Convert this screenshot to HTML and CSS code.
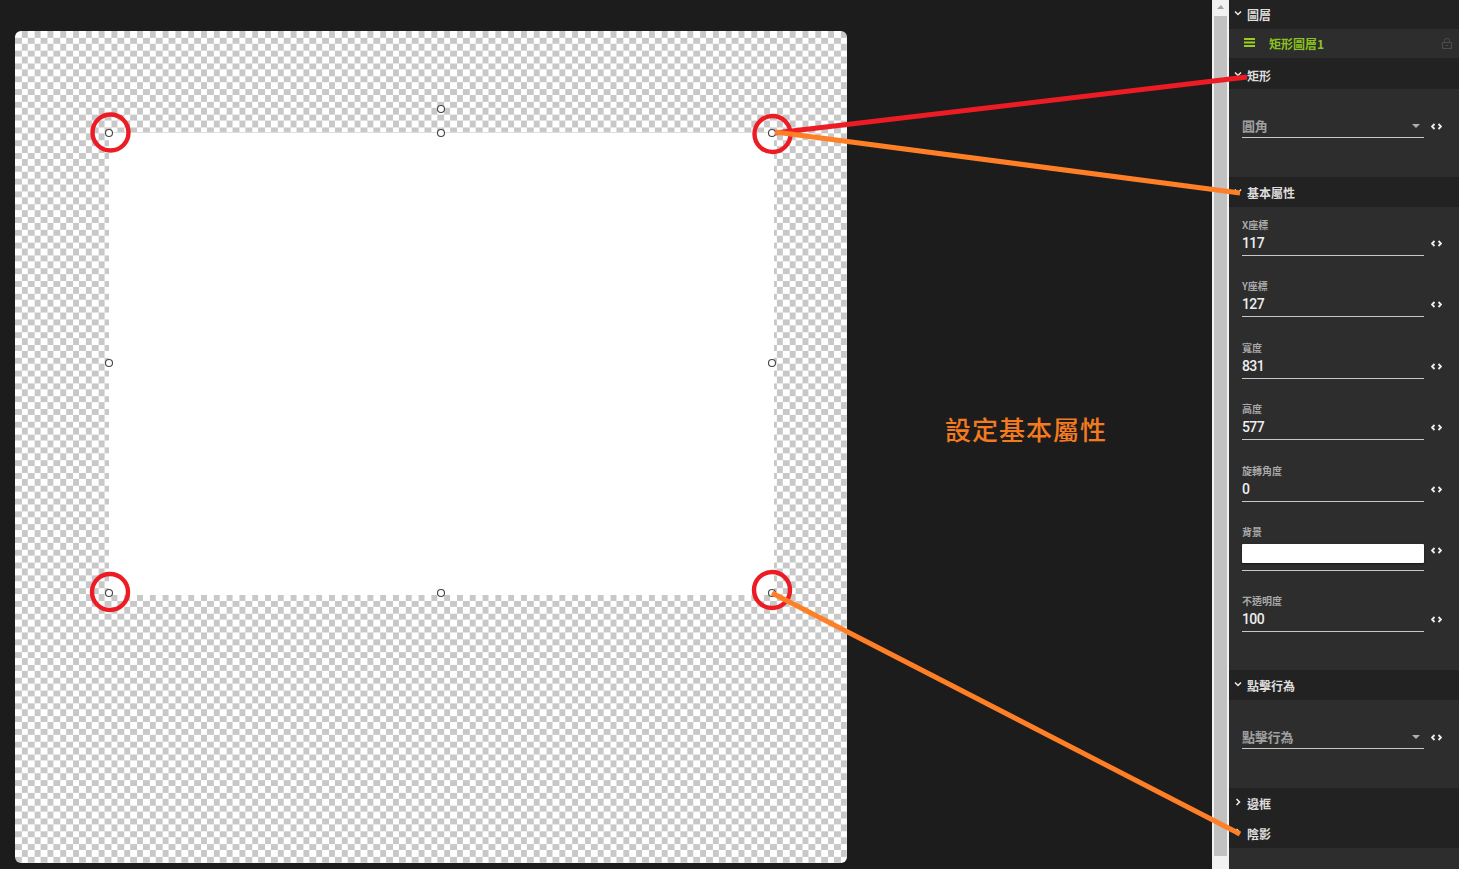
FILE: index.html
```html
<!DOCTYPE html>
<html lang="zh-Hant">
<head>
    <meta charset="UTF-8">
    <title>設定基本屬性</title>
    <link rel="stylesheet" href="styles.css">
</head>
<body>
    <div class="stage">
        <div class="canvas">
            <div class="shape"></div>
        </div>
    </div>

    <div class="scrollbar">
        <div class="scroll-up"></div>
        <div class="scroll-thumb"></div>
    </div>

    <div class="panel">
        <div class="head">
            <svg class="chev" viewBox="0 0 8 6"><path d="M1 1.5 4 4.5 7 1.5"/></svg>
            <span>圖層</span>
        </div>
        <div class="layer">
            <svg class="bars" viewBox="0 0 11 9"><path d="M0 1h11M0 4.5h11M0 8h11"/></svg>
            <span class="layer-name">矩形圖層1</span>
            <svg class="lock" viewBox="0 0 10 11"><path d="M.5 4.5h9v6h-9zM2.5 4.5V2.5a2.5 2 0 0 1 5 0v2M4 7.5h2"/></svg>
        </div>

        <div class="head head-tall">
            <svg class="chev" viewBox="0 0 8 6"><path d="M1 1.5 4 4.5 7 1.5"/></svg>
            <span>矩形</span>
        </div>
        <div class="section section-select">
            <div class="row">
                <div class="select">圓角<i class="caret"></i></div>
                <svg class="code" viewBox="0 0 11 7"><path d="M3.5 1 1 3.5 3.5 6M7.500 1 10 3.500 7.500 6"/></svg>
            </div>
        </div>

        <div class="head">
            <svg class="chev" viewBox="0 0 8 6"><path d="M1 1.5 4 4.5 7 1.5"/></svg>
            <span>基本屬性</span>
        </div>
        <div class="section section-props">
            <div class="field">
                <div class="label">X座標</div>
                <div class="row">
                    <div class="value">117</div>
                    <svg class="code" viewBox="0 0 11 7"><path d="M3.5 1 1 3.5 3.5 6M7.500 1 10 3.500 7.500 6"/></svg>
                </div>
            </div>
            <div class="field">
                <div class="label">Y座標</div>
                <div class="row">
                    <div class="value">127</div>
                    <svg class="code" viewBox="0 0 11 7"><path d="M3.5 1 1 3.5 3.5 6M7.500 1 10 3.500 7.500 6"/></svg>
                </div>
            </div>
            <div class="field">
                <div class="label">寬度</div>
                <div class="row">
                    <div class="value">831</div>
                    <svg class="code" viewBox="0 0 11 7"><path d="M3.5 1 1 3.5 3.5 6M7.500 1 10 3.500 7.500 6"/></svg>
                </div>
            </div>
            <div class="field">
                <div class="label">高度</div>
                <div class="row">
                    <div class="value">577</div>
                    <svg class="code" viewBox="0 0 11 7"><path d="M3.5 1 1 3.5 3.5 6M7.500 1 10 3.500 7.500 6"/></svg>
                </div>
            </div>
            <div class="field">
                <div class="label">旋轉角度</div>
                <div class="row">
                    <div class="value">0</div>
                    <svg class="code" viewBox="0 0 11 7"><path d="M3.5 1 1 3.5 3.5 6M7.500 1 10 3.500 7.500 6"/></svg>
                </div>
            </div>
            <div class="field field-color">
                <div class="label">背景</div>
                <div class="row">
                    <div class="value value-color"><div class="swatch"></div></div>
                    <svg class="code" viewBox="0 0 11 7"><path d="M3.5 1 1 3.5 3.5 6M7.500 1 10 3.500 7.500 6"/></svg>
                </div>
            </div>
            <div class="field">
                <div class="label">不透明度</div>
                <div class="row">
                    <div class="value">100</div>
                    <svg class="code" viewBox="0 0 11 7"><path d="M3.5 1 1 3.5 3.5 6M7.500 1 10 3.500 7.500 6"/></svg>
                </div>
            </div>
        </div>

        <div class="head head-low">
            <svg class="chev" viewBox="0 0 8 6"><path d="M1 1.5 4 4.5 7 1.5"/></svg>
            <span>點擊行為</span>
        </div>
        <div class="section section-select">
            <div class="row">
                <div class="select">點擊行為<i class="caret"></i></div>
                <svg class="code" viewBox="0 0 11 7"><path d="M3.5 1 1 3.5 3.5 6M7.500 1 10 3.500 7.500 6"/></svg>
            </div>
        </div>

        <div class="head">
            <svg class="chev chev-right" viewBox="0 0 8 6"><path d="M1 1.5 4 4.5 7 1.5"/></svg>
            <span>邊框</span>
        </div>
        <div class="head">
            <svg class="chev chev-right" viewBox="0 0 8 6"><path d="M1 1.5 4 4.5 7 1.5"/></svg>
            <span>陰影</span>
        </div>
    </div>

    <div class="note">設定基本屬性</div>

    <svg class="overlay" width="1459" height="869" viewBox="0 0 1459 869">
        <g class="handles">
            <circle cx="441" cy="109" r="3.500"/>
            <circle cx="109" cy="133" r="3.500"/>
            <circle cx="441" cy="133" r="3.500"/>
            <circle cx="772" cy="133" r="3.500"/>
            <circle cx="109" cy="363" r="3.500"/>
            <circle cx="772" cy="363" r="3.500"/>
            <circle cx="109" cy="593" r="3.500"/>
            <circle cx="441" cy="593" r="3.500"/>
            <circle cx="772" cy="593" r="3.500"/>
        </g>
        <g class="rings">
            <circle cx="110.500" cy="132.500" r="18"/>
            <circle cx="772.500" cy="134" r="18"/>
            <circle cx="110" cy="592" r="18"/>
            <circle cx="772" cy="590" r="18"/>
        </g>
        <path class="line-red" d="M775 133 1247 77"/>
        <path class="line-orange" d="M775 132 1240 193"/>
        <path class="line-orange" d="M772 593 1240 834"/>
    </svg>
</body>
</html>
```

FILE: styles.css
```css
body {
    margin: 0;
    width: 1459px;
    height: 869px;
    overflow: hidden;
    display: flex;
    position: relative;
    background: #1c1c1c;
    font-family: "Noto Sans CJK TC", "Roboto", sans-serif;
}

.stage {
    width: 1212px;
    padding: 31px 0 0 15px;
    box-sizing: border-box;
}
.canvas {
    width: 832px;
    height: 832px;
    position: relative;
    border-radius: 6px;
    background-color: #fff;
    background-image: conic-gradient(#c8c8c8 25%, #fff 0 50%, #c8c8c8 0 75%, #fff 0);
    background-size: 12.8px 12.8px;
}
.shape {
    position: absolute;
    left: 94px;
    top: 102px;
    width: 665px;
    height: 462px;
    background: #fff;
    box-shadow: 0 -1px 0 #ddd;
}

.note {
    position: absolute;
    left: 945px;
    top: 410px;
    font-size: 26px;
    font-weight: 500;
    line-height: 38px;
    letter-spacing: 1px;
    color: #f47a20;
    white-space: nowrap;
}

.overlay {
    position: absolute;
    left: 0;
    top: 0;
    pointer-events: none;
}
.handles circle {
    fill: #fff;
    stroke: #444;
    stroke-width: 1.100;
}
.rings circle {
    fill: none;
    stroke: #ed1c24;
    stroke-width: 4.400;
}
.line-red {
    fill: none;
    stroke: #ed1c24;
    stroke-width: 5;
}
.line-orange {
    fill: none;
    stroke: #ff7f27;
    stroke-width: 5;
}

.scrollbar {
    width: 17px;
    height: 869px;
    background: #f1f1f1;
    flex-shrink: 0;
    position: relative;
}
.scroll-up {
    width: 0;
    margin: 5px 0 0 5px;
    border-left: 4px solid transparent;
    border-right: 3px solid transparent;
    border-bottom: 4px solid #a3a3a3;
}
.scroll-thumb {
    width: 13px;
    height: 840px;
    margin: 7px 0 0 2px;
    background: #c1c1c1;
}

.panel {
    width: 230px;
    height: 869px;
    background: #2d2d2d;
    flex-shrink: 0;
}
.head {
    height: 30px;
    display: flex;
    align-items: center;
    padding-left: 5px;
    box-sizing: border-box;
    background: #222;
    color: #ddd;
    font-size: 12px;
    font-weight: 700;
}
.head:first-child {
    height: 29px;
}
.head-tall {
    height: 31px;
    padding-top: 4px;
}
.head-low {
    padding-top: 1px;
}
.chev {
    width: 8px;
    height: 6px;
    margin-right: 5px;
    margin-top: -3px;
    fill: none;
    stroke: #eee;
    stroke-width: 1.500;
}
.chev-right {
    transform: rotate(-90deg);
}

.layer {
    height: 29px;
    display: flex;
    align-items: center;
    padding-left: 15px;
    background: #2d2d2d;
    color: #8cc21f;
    font-size: 12px;
    font-weight: 700;
}
.bars {
    width: 11px;
    height: 9px;
    margin-right: 14px;
    margin-top: -2px;
    stroke: #9acd1e;
    stroke-width: 2;
}
.lock {
    width: 10px;
    height: 11px;
    margin-left: auto;
    margin-right: 7px;
    fill: none;
    stroke: #4c4c4c;
    stroke-width: 1;
}

.section {
    padding-left: 13px;
}
.section-select {
    height: 88px;
    padding-top: 26px;
    box-sizing: border-box;
}
.section-props {
    height: 463px;
    padding-top: 12px;
    box-sizing: border-box;
}
.field {
    margin-bottom: 24.400px;
}
.field-color {
    margin-bottom: 24px;
}
.label {
    height: 13px;
    font-size: 10px;
    line-height: 12px;
    color: #a8a8a8;
    font-weight: 700;
}
.row {
    display: flex;
    align-items: flex-start;
}
.value {
    width: 182px;
    height: 23px;
    border-bottom: 1px solid #c8c8c8;
    font-family: "Roboto", sans-serif;
    font-size: 14px;
    font-weight: 500;
    line-height: 23px;
    letter-spacing: -0.600px;
    color: #eee;
}
.value-color {
    height: 31px;
}
.swatch {
    height: 19px;
    margin-top: 5px;
    border-radius: 1px;
    background: #fff;
    box-shadow: 0 1px 2px rgba(0, 0, 0, 0.5);
}
.select {
    width: 182px;
    height: 22px;
    position: relative;
    border-bottom: 1px solid #c8c8c8;
    font-size: 13px;
    font-weight: 700;
    line-height: 21px;
    letter-spacing: -0.200px;
    color: #a0a0a0;
}
.caret {
    position: absolute;
    right: 4px;
    top: 9px;
    border-left: 4px solid transparent;
    border-right: 4px solid transparent;
    border-top: 4px solid #b0b0b0;
}
.code {
    width: 11px;
    height: 7px;
    margin: 8px 0 0 7px;
    fill: none;
    stroke: #f0f0f0;
    stroke-width: 1.800;
}
```
